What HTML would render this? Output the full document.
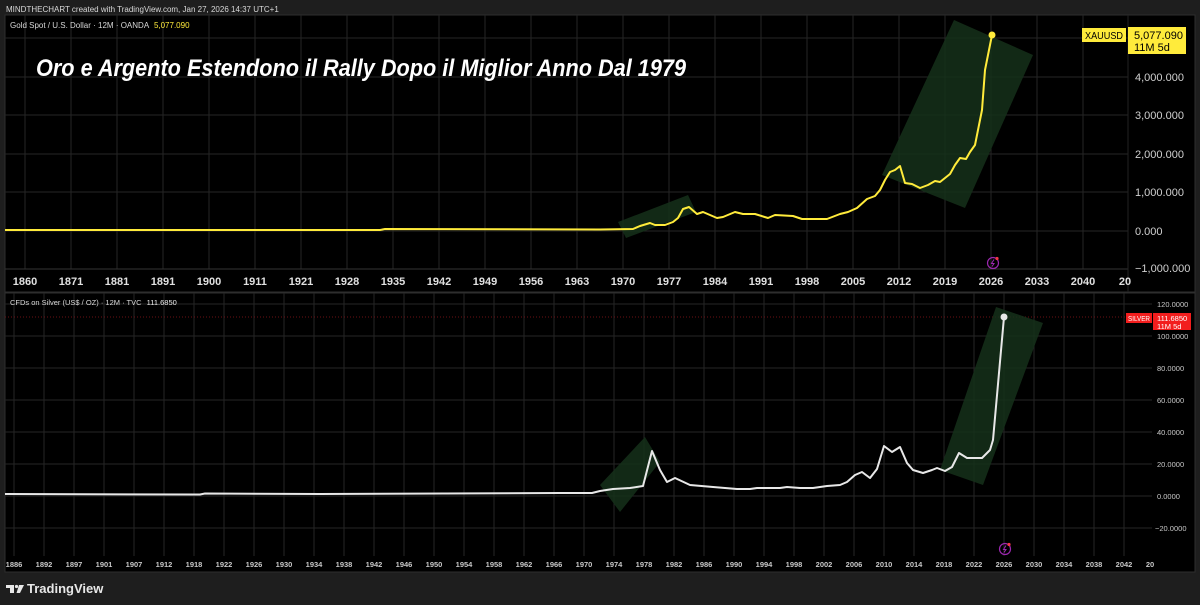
<!DOCTYPE html>
<html><head><meta charset="utf-8"><style>
html,body{margin:0;padding:0;background:#1e1e1e;width:1200px;height:605px;overflow:hidden}
svg{display:block}
text{font-family:"Liberation Sans",sans-serif}
</style></head><body>
<svg width="1200" height="605" viewBox="0 0 1200 605" xmlns="http://www.w3.org/2000/svg">
<rect width="1200" height="605" fill="#1e1e1e"/>
<text x="6" y="12" font-size="8" fill="#d8d8d8">MINDTHECHART created with TradingView.com, Jan 27, 2026 14:37 UTC+1</text>
<!-- top panel -->
<rect x="5" y="15" width="1190" height="277" fill="#000" stroke="#2e2e2e"/>
<g stroke="#262626" stroke-width="1">
<line x1="5" y1="38" x2="1128" y2="38"/><line x1="5" y1="77" x2="1128" y2="77"/><line x1="5" y1="115" x2="1128" y2="115"/><line x1="5" y1="154" x2="1128" y2="154"/><line x1="5" y1="192" x2="1128" y2="192"/><line x1="5" y1="231" x2="1128" y2="231"/>
<line x1="25" y1="15" x2="25" y2="269"/><line x1="71" y1="15" x2="71" y2="269"/><line x1="117" y1="15" x2="117" y2="269"/><line x1="163" y1="15" x2="163" y2="269"/><line x1="209" y1="15" x2="209" y2="269"/><line x1="255" y1="15" x2="255" y2="269"/><line x1="301" y1="15" x2="301" y2="269"/><line x1="347" y1="15" x2="347" y2="269"/><line x1="393" y1="15" x2="393" y2="269"/><line x1="439" y1="15" x2="439" y2="269"/><line x1="485" y1="15" x2="485" y2="269"/><line x1="531" y1="15" x2="531" y2="269"/><line x1="577" y1="15" x2="577" y2="269"/><line x1="623" y1="15" x2="623" y2="269"/><line x1="669" y1="15" x2="669" y2="269"/><line x1="715" y1="15" x2="715" y2="269"/><line x1="761" y1="15" x2="761" y2="269"/><line x1="807" y1="15" x2="807" y2="269"/><line x1="853" y1="15" x2="853" y2="269"/><line x1="899" y1="15" x2="899" y2="269"/><line x1="945" y1="15" x2="945" y2="269"/><line x1="991" y1="15" x2="991" y2="269"/><line x1="1037" y1="15" x2="1037" y2="269"/><line x1="1083" y1="15" x2="1083" y2="269"/>
</g>
<line x1="5" y1="269" x2="1128" y2="269" stroke="#333"/>
<line x1="1128" y1="15" x2="1128" y2="292" stroke="#222"/>
<polygon points="618,222 688,195 696,212 626,238" fill="#15301a" opacity="0.85"/>
<polygon points="882,175 954,20 1033,55 965,208" fill="#15301a" opacity="0.85"/>
<polyline fill="none" stroke="#ffeb3b" stroke-width="2" stroke-linejoin="round" points="5,230 380,230 385,229 600,229.5 633,229 640,226 650,223 655,225 665,225 673,222 678,218 683,209 689,207 697,214 703,212 717,218 723,217 735,212 743,214 755,214 768,218 775,215 793,216 802,219 827,219 840,214 848,212 857,208 867,199 875,196 880,190 885,180 890,172 895,170 900,166 905,183 912,184 920,188 928,185 935,181 940,182 945,178 950,174 955,165 960,158 966,159 970,152 975,145 978,130 982,110 985,70 988,55 992,35"/>
<circle cx="992" cy="35" r="3.5" fill="#ffeb3b"/>
<text x="10" y="28" font-size="8" fill="#d8d8d8">Gold Spot / U.S. Dollar · 12M · OANDA <tspan fill="#ffeb3b" dx="3">5,077.090</tspan></text>
<text x="36" y="76" font-size="24" font-weight="bold" font-style="italic" fill="#fff" textLength="650" lengthAdjust="spacingAndGlyphs">Oro e Argento Estendono il Rally Dopo il Miglior Anno Dal 1979</text>
<g font-size="11" fill="#d0d0d0">
<text x="1135" y="81">4,000.000</text><text x="1135" y="119">3,000.000</text><text x="1135" y="158">2,000.000</text><text x="1135" y="196">1,000.000</text><text x="1135" y="235">0.000</text><text x="1135" y="272">−1,000.000</text>
</g>
<rect x="1082" y="28" width="44" height="14" fill="#ffeb3b"/>
<text x="1085" y="39" font-size="10" fill="#000" textLength="38" lengthAdjust="spacingAndGlyphs">XAUUSD</text>
<rect x="1128" y="27" width="58" height="27" fill="#ffeb3b"/>
<text x="1134" y="39" font-size="11" fill="#000">5,077.090</text>
<text x="1134" y="51" font-size="11" fill="#000">11M 5d</text>
<circle cx="993" cy="263" r="5.5" fill="none" stroke="#9c27b0" stroke-width="1.2"/>
<path d="M994,259.5 L991.5,263.5 L994,263.5 L992,266.5" stroke="#9c27b0" fill="none" stroke-width="1"/>
<circle cx="997" cy="258.5" r="1.6" fill="#f23645"/>
<g font-size="11" font-weight="bold" fill="#e0e0e0" text-anchor="middle">
<text x="25" y="285">1860</text><text x="71" y="285">1871</text><text x="117" y="285">1881</text><text x="163" y="285">1891</text><text x="209" y="285">1900</text><text x="255" y="285">1911</text><text x="301" y="285">1921</text><text x="347" y="285">1928</text><text x="393" y="285">1935</text><text x="439" y="285">1942</text><text x="485" y="285">1949</text><text x="531" y="285">1956</text><text x="577" y="285">1963</text><text x="623" y="285">1970</text><text x="669" y="285">1977</text><text x="715" y="285">1984</text><text x="761" y="285">1991</text><text x="807" y="285">1998</text><text x="853" y="285">2005</text><text x="899" y="285">2012</text><text x="945" y="285">2019</text><text x="991" y="285">2026</text><text x="1037" y="285">2033</text><text x="1083" y="285">2040</text><text x="1125" y="285">20</text>
</g>
<!-- bottom panel -->
<rect x="5" y="293" width="1190" height="279" fill="#000" stroke="#2e2e2e"/>
<g stroke="#262626">
<line x1="5" y1="304" x2="1152" y2="304"/><line x1="5" y1="336" x2="1152" y2="336"/><line x1="5" y1="368" x2="1152" y2="368"/><line x1="5" y1="400" x2="1152" y2="400"/><line x1="5" y1="432" x2="1152" y2="432"/><line x1="5" y1="464" x2="1152" y2="464"/><line x1="5" y1="496" x2="1152" y2="496"/><line x1="5" y1="528" x2="1152" y2="528"/>
</g>
<g stroke="#262626">
<line x1="14" y1="293" x2="14" y2="556"/><line x1="44" y1="293" x2="44" y2="556"/><line x1="74" y1="293" x2="74" y2="556"/><line x1="104" y1="293" x2="104" y2="556"/><line x1="134" y1="293" x2="134" y2="556"/><line x1="164" y1="293" x2="164" y2="556"/><line x1="194" y1="293" x2="194" y2="556"/><line x1="224" y1="293" x2="224" y2="556"/><line x1="254" y1="293" x2="254" y2="556"/><line x1="284" y1="293" x2="284" y2="556"/><line x1="314" y1="293" x2="314" y2="556"/><line x1="344" y1="293" x2="344" y2="556"/><line x1="374" y1="293" x2="374" y2="556"/><line x1="404" y1="293" x2="404" y2="556"/><line x1="434" y1="293" x2="434" y2="556"/><line x1="464" y1="293" x2="464" y2="556"/><line x1="494" y1="293" x2="494" y2="556"/><line x1="524" y1="293" x2="524" y2="556"/><line x1="554" y1="293" x2="554" y2="556"/><line x1="584" y1="293" x2="584" y2="556"/><line x1="614" y1="293" x2="614" y2="556"/><line x1="644" y1="293" x2="644" y2="556"/><line x1="674" y1="293" x2="674" y2="556"/><line x1="704" y1="293" x2="704" y2="556"/><line x1="734" y1="293" x2="734" y2="556"/><line x1="764" y1="293" x2="764" y2="556"/><line x1="794" y1="293" x2="794" y2="556"/><line x1="824" y1="293" x2="824" y2="556"/><line x1="854" y1="293" x2="854" y2="556"/><line x1="884" y1="293" x2="884" y2="556"/><line x1="914" y1="293" x2="914" y2="556"/><line x1="944" y1="293" x2="944" y2="556"/><line x1="974" y1="293" x2="974" y2="556"/><line x1="1004" y1="293" x2="1004" y2="556"/><line x1="1034" y1="293" x2="1034" y2="556"/><line x1="1064" y1="293" x2="1064" y2="556"/><line x1="1094" y1="293" x2="1094" y2="556"/><line x1="1124" y1="293" x2="1124" y2="556"/>
</g>
<line x1="5" y1="317" x2="1152" y2="317" stroke="#6b0f14" stroke-dasharray="1,2"/>
<polygon points="600,485 645,437 660,462 620,512" fill="#15301a" opacity="0.85"/>
<polygon points="940,470 996,307 1043,323 983,485" fill="#15301a" opacity="0.85"/>
<polyline fill="none" stroke="#e8e8e8" stroke-width="2" stroke-linejoin="round" points="5,494 200,494.5 205,493.5 320,494 560,493 580,493 592,493 600,491 613,489 630,488 643,486 652,451 660,470 667,482 675,478 690,485 713,487 737,489 750,489 757,488 780,488 787,487 800,488 813,488 827,486 840,485 847,482 855,475 862,472 870,478 877,469 884,446 892,452 900,447 907,463 913,470 923,473 932,470 937,468 945,471 952,467 959,453 967,458 982,458 990,450 993,440 1004,317"/>
<circle cx="1004" cy="317" r="3.5" fill="#e8e8e8"/>
<text x="10" y="305" font-size="7.5" fill="#d8d8d8">CFDs on Silver (US$ / OZ) · 12M · TVC <tspan fill="#eeeeee" dx="3">111.6850</tspan></text>
<g font-size="7.5" fill="#c8c8c8">
<text x="1157" y="307">120.0000</text><text x="1157" y="339">100.0000</text><text x="1157" y="371">80.0000</text><text x="1157" y="403">60.0000</text><text x="1157" y="435">40.0000</text><text x="1157" y="467">20.0000</text><text x="1157" y="499">0.0000</text><text x="1155" y="531">−20.0000</text>
</g>
<rect x="1126" y="313" width="26" height="10" fill="#f21d1d"/>
<text x="1128" y="321" font-size="7.5" fill="#fff" textLength="22" lengthAdjust="spacingAndGlyphs">SILVER</text>
<rect x="1153" y="313" width="38" height="17" fill="#f21d1d"/>
<text x="1157" y="321" font-size="7.5" fill="#fff">111.6850</text>
<text x="1157" y="329" font-size="7.5" fill="#fff">11M 5d</text>
<circle cx="1005" cy="549" r="5.5" fill="none" stroke="#9c27b0" stroke-width="1.2"/>
<path d="M1006,545.5 L1003.5,549.5 L1006,549.5 L1004,552.5" stroke="#9c27b0" fill="none" stroke-width="1"/>
<circle cx="1009" cy="544.5" r="1.6" fill="#f23645"/>
<g font-size="7.5" font-weight="bold" fill="#c8c8c8" text-anchor="middle">
<text x="14" y="567">1886</text><text x="44" y="567">1892</text><text x="74" y="567">1897</text><text x="104" y="567">1901</text><text x="134" y="567">1907</text><text x="164" y="567">1912</text><text x="194" y="567">1918</text><text x="224" y="567">1922</text><text x="254" y="567">1926</text><text x="284" y="567">1930</text><text x="314" y="567">1934</text><text x="344" y="567">1938</text><text x="374" y="567">1942</text><text x="404" y="567">1946</text><text x="434" y="567">1950</text><text x="464" y="567">1954</text><text x="494" y="567">1958</text><text x="524" y="567">1962</text><text x="554" y="567">1966</text><text x="584" y="567">1970</text><text x="614" y="567">1974</text><text x="644" y="567">1978</text><text x="674" y="567">1982</text><text x="704" y="567">1986</text><text x="734" y="567">1990</text><text x="764" y="567">1994</text><text x="794" y="567">1998</text><text x="824" y="567">2002</text><text x="854" y="567">2006</text><text x="884" y="567">2010</text><text x="914" y="567">2014</text><text x="944" y="567">2018</text><text x="974" y="567">2022</text><text x="1004" y="567">2026</text><text x="1034" y="567">2030</text><text x="1064" y="567">2034</text><text x="1094" y="567">2038</text><text x="1124" y="567">2042</text><text x="1150" y="567">20</text>
</g>
<!-- footer logo -->
<path d="M6,585 H14 V593 H10 V588 H6 Z" fill="#e8e8e8"/>
<circle cx="16.5" cy="586.5" r="1.6" fill="#e8e8e8"/>
<path d="M19,585 H24 L20,593 H16.5 Z" fill="#e8e8e8"/>
<text x="27" y="593" font-size="13" font-weight="bold" fill="#e8e8e8">TradingView</text>
</svg>
</body></html>
